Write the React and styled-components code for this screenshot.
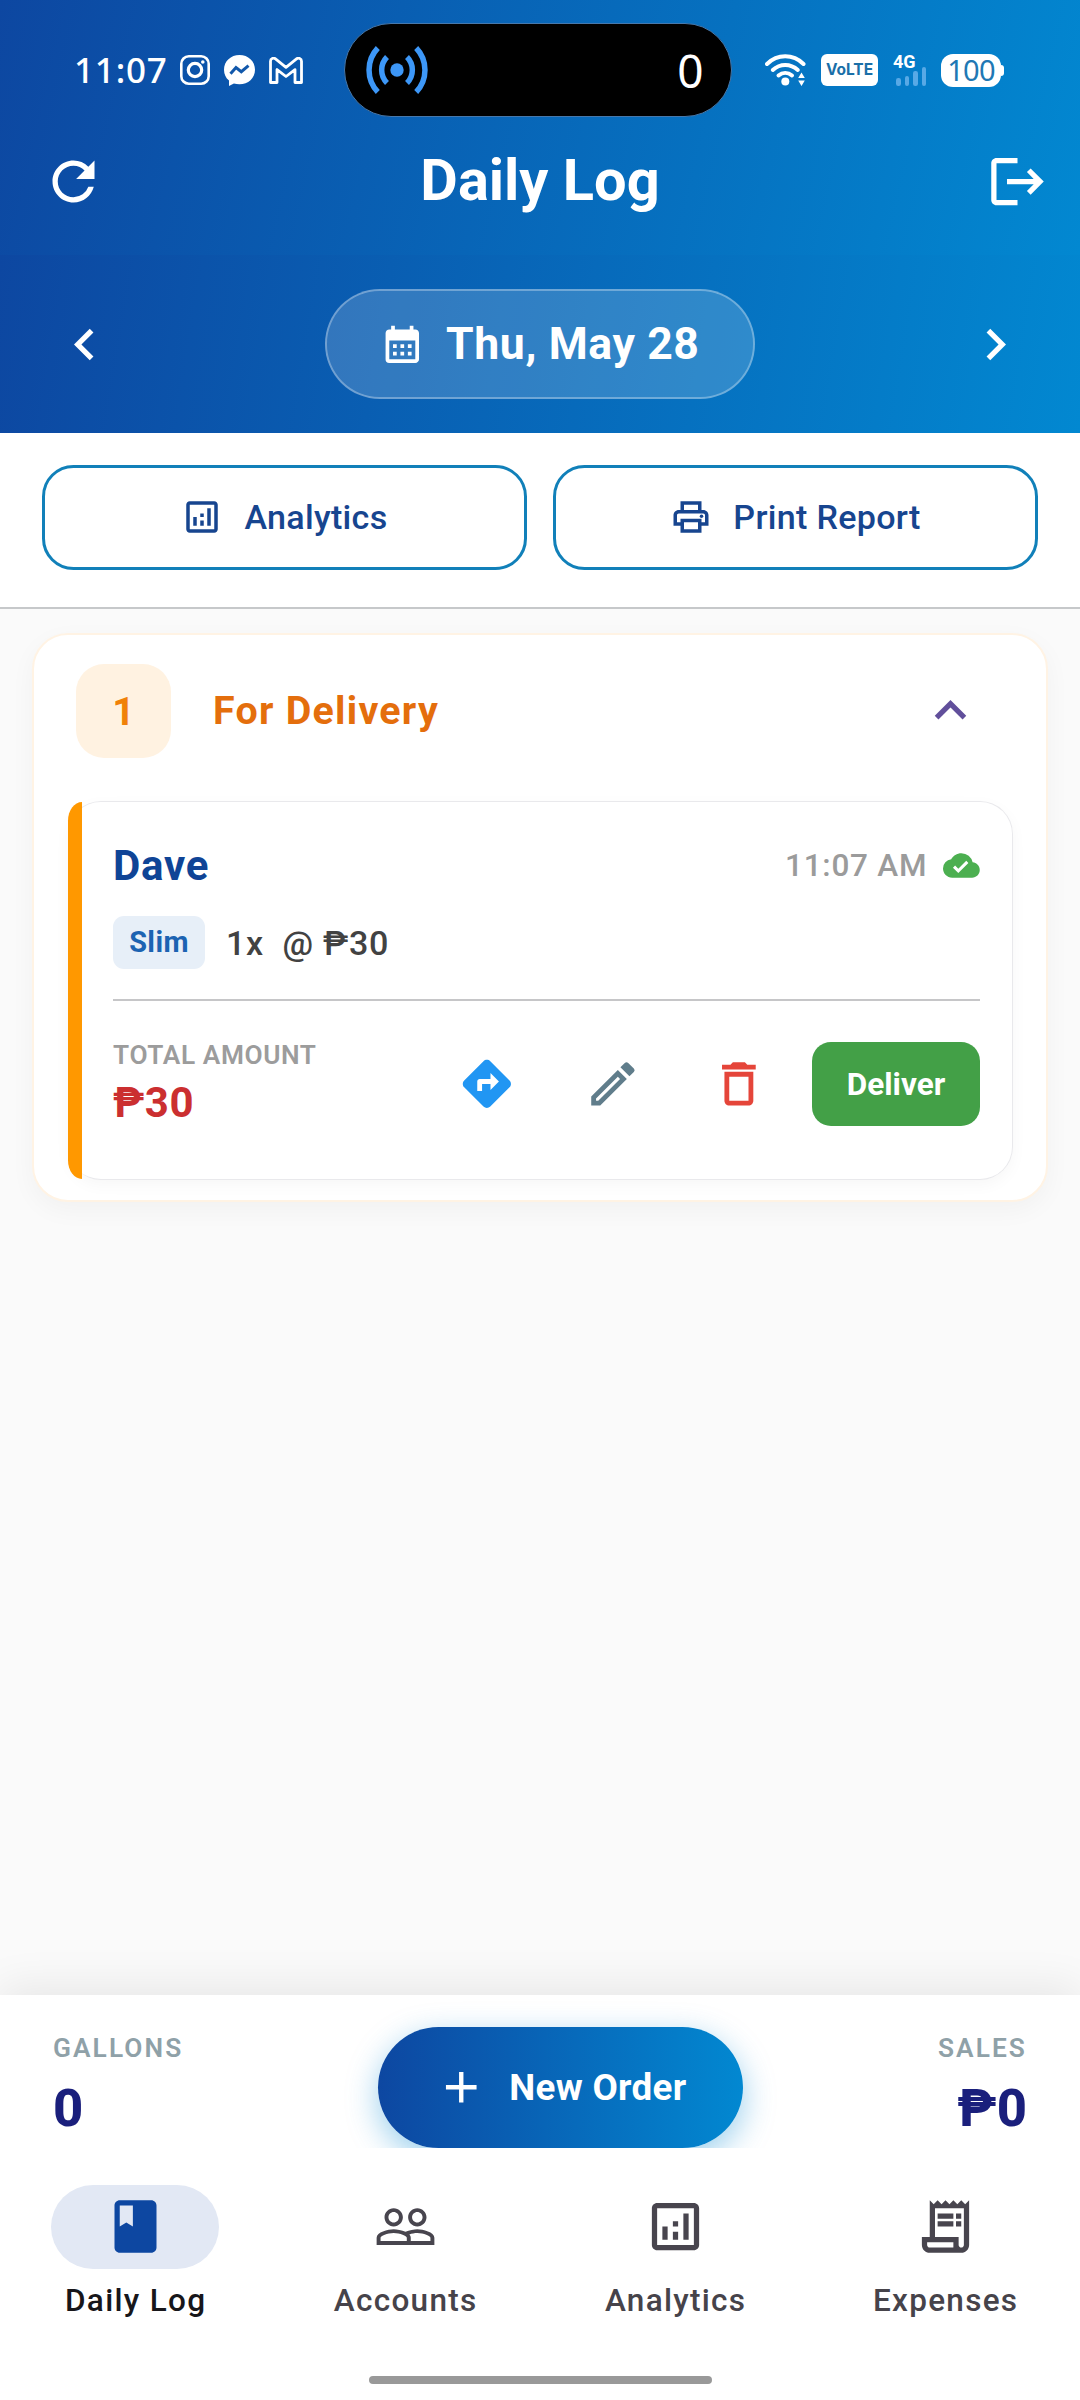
import React from "react";
import styled, { createGlobalStyle } from "styled-components";
import {
  MdAdd,
  MdCalendarMonth,
  MdChevronLeft,
  MdChevronRight,
  MdClass,
  MdCloudDone,
  MdDeleteOutline,
  MdDirections,
  MdExpandLess,
  MdLogout,
  MdOutlineAnalytics,
  MdOutlineEdit,
  MdOutlinePrint,
  MdOutlineReceiptLong,
  MdPeopleOutline,
  MdRefresh,
} from "react-icons/md";

const GlobalStyle = createGlobalStyle`
  * {
    box-sizing: border-box;
  }

  body {
    margin: 0;
    background: #fafafa;
    font-family: Roboto, "Noto Sans", sans-serif;
  }

  svg {
    display: block;
    flex-shrink: 0;
  }

  button {
    font-family: inherit;
    padding: 0;
    border: none;
    background: none;
  }
`;

const Screen = styled.div`
  width: 1080px;
  height: 2400px;
  display: flex;
  flex-direction: column;
  background: #fafafa;
  overflow: hidden;
`;

const Header = styled.header`
  height: 255px;
  flex-shrink: 0;
  background: linear-gradient(103.3deg, #0d47a1, #0288d1);
  color: #fff;
`;

const StatusBar = styled.div`
  height: 108px;
  padding: 23px 76px 0 74px;
  display: flex;
  align-items: flex-start;
  justify-content: space-between;
`;

const StatusGroup = styled.div`
  height: 94px;
  display: flex;
  align-items: center;
  gap: ${(props) => props.$gap}px;
`;

const Clock = styled.span`
  font-family: "Noto Sans", sans-serif;
  font-weight: 500;
  font-size: 35px;
  line-height: 40px;
  width: 92px;
  letter-spacing: 0.8px;
`;

const Island = styled.div`
  width: 388px;
  height: 94px;
  margin-left: 7px;
  padding: 0 27px 0 20px;
  border: 1.5px solid #4778ab;
  border-radius: 47px;
  background: #000;
  display: flex;
  align-items: center;
  justify-content: space-between;
  font-family: "Noto Sans", sans-serif;
  font-size: 46px;
  line-height: 60px;
`;

const VolteBadge = styled.span`
  width: 57px;
  height: 32px;
  border-radius: 6px;
  background: #fff;
  color: #1a6fa8;
  font-family: Inter, sans-serif;
  font-weight: 700;
  font-size: 15.5px;
  line-height: 32px;
  text-align: center;
`;

const Network = styled.div`
  width: 33px;
  height: 32px;
  display: flex;
  flex-direction: column;
  font-weight: 700;
  font-size: 18px;
  line-height: 15px;
`;

const SignalBars = styled.div`
  height: 20px;
  margin: -3px 0 0 3px;
  display: flex;
  align-items: flex-end;
  gap: 4px;
`;

const SignalBar = styled.i`
  width: 4.5px;
  height: ${(props) => props.$height}px;
  border-radius: 2.2px;
  background: #58a9e6;
`;

const Battery = styled.div`
  display: flex;
  align-items: center;
`;

const BatteryBody = styled.span`
  width: 60px;
  height: 33px;
  border-radius: 12px;
  background: #fff;
  color: #2078b4;
  font-family: "Noto Sans", sans-serif;
  font-size: 29px;
  line-height: 32px;
  letter-spacing: -0.7px;
  text-align: center;
`;

const BatteryTip = styled.i`
  width: 3px;
  height: 11px;
  border-radius: 0 3px 3px 0;
  background: #fff;
`;

const AppBar = styled.div`
  height: 147px;
  padding: 0 31px 0 42px;
  display: flex;
  align-items: center;
  justify-content: space-between;
`;

const Title = styled.h1`
  margin: 0 11px 4px 0;
  font-weight: 700;
  font-size: 57.75px;
  line-height: 68px;
`;

const DateBar = styled.div`
  height: 178px;
  flex-shrink: 0;
  padding: 0 53px;
  display: flex;
  align-items: center;
  justify-content: space-between;
  background: linear-gradient(99.4deg, #0d47a1, #0288d1);
  color: #fff;
`;

const DatePill = styled.button`
  width: 430px;
  height: 110px;
  border: 2px solid rgba(255, 255, 255, 0.42);
  border-radius: 55px;
  background: rgba(255, 255, 255, 0.17);
  background-clip: padding-box;
  color: #fff;
  display: flex;
  align-items: center;
  justify-content: center;
  gap: 21px;
  font-weight: 700;
  font-size: 44.6px;
  letter-spacing: 0.6px;
`;

const Actions = styled.div`
  height: 176px;
  flex-shrink: 0;
  padding: 32px 42px 0;
  display: flex;
  gap: 26px;
  background: #fff;
  border-bottom: 2px solid #c6c8ca;
`;

const ActionButton = styled.button`
  flex: 1;
  height: 105px;
  padding-bottom: 1px;
  border: 3.5px solid #1180b9;
  border-radius: 31.5px;
  color: #17458f;
  display: flex;
  align-items: center;
  justify-content: center;
  gap: 21px;
  font-weight: 500;
  font-size: 34.1px;
  letter-spacing: 0.3px;
`;

const Content = styled.main`
  flex: 1;
  padding: 24px 32px;
`;

const Section = styled.section`
  height: 569px;
  padding: 28px 33px 18px 34px;
  border: 2px solid #fff3e4;
  border-radius: 36px;
  background: #fff;
  box-shadow: 0 8px 26px rgba(0, 0, 0, 0.04);
`;

const SectionHeader = styled.div`
  height: 95px;
  padding: 0 31px 0 8px;
  margin-bottom: 43px;
  display: flex;
  align-items: center;
`;

const CountBadge = styled.span`
  width: 95px;
  height: 94px;
  border-radius: 28px;
  background: #fff2e1;
  color: #f08108;
  font-weight: 700;
  font-size: 39.4px;
  line-height: 95px;
  text-align: center;
`;

const SectionTitle = styled.h2`
  flex: 1;
  margin: 0 0 0 42px;
  color: #e46e0c;
  font-weight: 700;
  font-size: 39.4px;
  line-height: 46px;
  letter-spacing: 1.25px;
`;

const OrderCard = styled.article`
  height: 379px;
  display: flex;
  border: 1.5px solid #e9e9ec;
  border-left: none;
  border-radius: 33px;
  box-shadow: 0 5px 16px rgba(0, 0, 0, 0.035);

  &::before {
    content: "";
    width: 13.5px;
    border-radius: 15px 0 0 15px / 20px 0 0 20px;
    background: #ff9800;
  }
`;

const OrderBody = styled.div`
  flex: 1;
  padding: 33px 32px 0 31.5px;
`;

const OrderTop = styled.div`
  height: 60px;
  display: flex;
  align-items: center;
  justify-content: space-between;
`;

const Customer = styled.h3`
  margin: 0;
  color: #0f4496;
  font-weight: 700;
  font-size: 42px;
  letter-spacing: 0.8px;
`;

const OrderTime = styled.div`
  display: flex;
  align-items: center;
  gap: 16px;
  color: #9b9b9b;
  font-weight: 500;
  font-size: 31.5px;
  letter-spacing: 0.75px;

  svg {
    color: #4caf50;
  }
`;

const OrderLine = styled.div`
  height: 53px;
  margin-top: 21px;
  display: flex;
  align-items: center;
  color: #424242;
  font-weight: 500;
  font-size: 34.1px;
  letter-spacing: 0.75px;
  white-space: pre;
`;

const ProductChip = styled.span`
  width: 92px;
  height: 53px;
  margin-right: 21px;
  border-radius: 11px;
  background: #e7eff8;
  color: #1c63b2;
  font-weight: 700;
  font-size: 28.9px;
  line-height: 53px;
  letter-spacing: 0.4px;
  text-align: center;
`;

const Divider = styled.hr`
  height: 2px;
  margin: 30px 0 20px;
  border: none;
  background: #c6c6c8;
`;

const OrderFooter = styled.div`
  height: 126px;
  display: flex;
  align-items: center;
`;

const Total = styled.div`
  flex: 1;
`;

const TotalLabel = styled.div`
  color: #9c9c9c;
  font-weight: 600;
  font-size: 26.25px;
  line-height: 37px;
  letter-spacing: 0.6px;
`;

const TotalValue = styled.div`
  color: #cb2f30;
  font-weight: 700;
  font-size: 42px;
  line-height: 57px;
  letter-spacing: 0.5px;
`;

const IconButton = styled.button`
  width: 126px;
  height: 126px;
  display: flex;
  align-items: center;
  justify-content: center;
  color: ${(props) => props.$color};
`;

const DeliverButton = styled.button`
  width: 168px;
  height: 84px;
  margin-left: 10px;
  border-radius: 19px;
  background: #43a047;
  color: #fff;
  font-weight: 700;
  font-size: 31.5px;
`;

const Summary = styled.div`
  height: 153px;
  flex-shrink: 0;
  padding: 32px 53px 0;
  display: flex;
  align-items: flex-start;
  justify-content: space-between;
  background: #fff;
  box-shadow: 0 -8px 40px rgba(0, 0, 0, 0.08);
  overflow: hidden;
`;

const Stat = styled.div`
  text-align: ${(props) => props.$align};
`;

const StatLabel = styled.div`
  color: #8fa1a8;
  font-weight: 600;
  font-size: 26.25px;
  line-height: 42px;
  letter-spacing: 2.1px;
`;

const StatValue = styled.div`
  margin-top: 8px;
  color: #1a1f7c;
  font-weight: 800;
  font-size: 52.5px;
  line-height: 62px;
`;

const NewOrderButton = styled.button`
  width: 365px;
  height: 121px;
  border-radius: 61px;
  background: linear-gradient(90deg, #0d47a1, #0288d1);
  box-shadow: 0 10px 32px rgba(2, 136, 209, 0.4);
  color: #fff;
  display: flex;
  align-items: center;
  justify-content: center;
  gap: 22px;
  font-weight: 700;
  font-size: 36.75px;
  letter-spacing: 0.3px;
`;

const NavBar = styled.nav`
  height: 252px;
  flex-shrink: 0;
  display: flex;
  flex-direction: column;
  justify-content: space-between;
  align-items: center;
  padding: 37px 0 16px;
  background: #fff;
`;

const NavItems = styled.div`
  width: 100%;
  display: grid;
  grid-template-columns: repeat(4, 1fr);
`;

const NavItem = styled.a`
  display: flex;
  flex-direction: column;
  align-items: center;
  gap: 11px;
  color: ${(props) => (props.$active ? "#17161a" : "#46434a")};
  font-weight: 500;
  font-size: 31.5px;
  line-height: 42px;
  letter-spacing: 1.3px;
  text-indent: 1.3px;
`;

const NavIndicator = styled.span`
  width: 168px;
  height: 84px;
  padding-bottom: 1px;
  border-radius: 42px;
  display: flex;
  align-items: center;
  justify-content: center;
  background: ${(props) => (props.$active ? "#e2e8f4" : "transparent")};
  color: ${(props) => (props.$active ? "#0d47a1" : "#48454e")};
`;

const HomeHandle = styled.div`
  width: 343px;
  height: 8px;
  border-radius: 4px;
  background: #999;
`;

const InstagramIcon = () => (
  <svg width="30" height="30" viewBox="0 0 30 30" fill="none" stroke="#fff">
    <rect x="1.3" y="1.3" width="27.4" height="27.4" rx="7.5" strokeWidth="2.6" />
    <circle cx="15" cy="15" r="6.7" strokeWidth="3.2" />
    <circle cx="22.8" cy="7" r="1.8" fill="#fff" stroke="none" />
  </svg>
);

const MessengerIcon = () => (
  <svg width="31" height="31" viewBox="0 0 31 31">
    <path
      fill="#fff"
      d="M15.5 0C6.8 0 0 6.3 0 14.7c0 4.4 1.8 8.2 5 10.9V31l4.9-2.5c1.7.5 3.6.8 5.6.8C24.2 29.3 31 23 31 14.7 31 6.3 24.2 0 15.5 0z"
    />
    <path d="M6.5 18.8l5.5-6.3 5.3 4.2 7.2-6" fill="none" stroke="#1158ab" strokeWidth="3" />
  </svg>
);

const GmailIcon = () => (
  <svg width="34" height="27" viewBox="0 0 34 27" fill="none" stroke="#fff" strokeWidth="2.8">
    <path
      strokeLinejoin="round"
      d="M1.5 25.5V4.2c0-2.8 3-3.8 5-2.3L17 10.3 27.5 1.9c2-1.5 5-.5 5 2.3v21.3h-6.5V12.6L17 19.5 8 12.6v12.9z"
    />
  </svg>
);

const HotspotIcon = () => (
  <svg width="64" height="48" viewBox="0 0 64 48" fill="none" stroke="#3d97f7" strokeWidth="5.5">
    <circle cx="32" cy="24" r="6.7" fill="#3d97f7" stroke="none" />
    <path d="M22 11a18.5 18.5 0 0 0 0 26M42 11a18.5 18.5 0 0 1 0 26" />
    <path d="M12.8 2a32 32 0 0 0 0 44M51.2 2a32 32 0 0 1 0 44" />
  </svg>
);

const WifiIcon = () => (
  <svg width="41" height="32" viewBox="0 0 41 32" fill="none" stroke="#fff" strokeLinecap="round">
    <path d="M2 10c10.5-10.2 26-10.2 36.5 0" strokeWidth="4" />
    <path d="M7.8 16c7.2-6.7 17.7-6.7 25 0" strokeWidth="4" />
    <path d="M13.5 21.5c4-3.4 9.5-3.4 13.5 0" strokeWidth="4" />
    <circle cx="20.3" cy="27.6" r="4" fill="#fff" stroke="none" />
    <path d="M36.5 18.5l3.3 5.500h-6.6zM36.5 32l3.3-5.500h-6.6z" fill="#fff" stroke="none" />
  </svg>
);

const signal = [8, 10, 15, 19.5];

const navItems = [
  { label: "Daily Log", icon: MdClass, active: true },
  { label: "Accounts", icon: MdPeopleOutline },
  { label: "Analytics", icon: MdOutlineAnalytics },
  { label: "Expenses", icon: MdOutlineReceiptLong },
];

const App = () => {
  return (
    <Screen>
      <GlobalStyle />
      <Header>
        <StatusBar>
          <StatusGroup $gap={14}>
            <Clock>11:07</Clock>
            <InstagramIcon />
            <MessengerIcon />
            <GmailIcon />
          </StatusGroup>
          <Island>
            <HotspotIcon />
            <span>0</span>
          </Island>
          <StatusGroup $gap={15}>
            <WifiIcon />
            <VolteBadge>VoLTE</VolteBadge>
            <Network>
              4G
              <SignalBars>
                {signal.map((height) => (
                  <SignalBar key={height} $height={height} />
                ))}
              </SignalBars>
            </Network>
            <Battery>
              <BatteryBody>100</BatteryBody>
              <BatteryTip />
            </Battery>
          </StatusGroup>
        </StatusBar>
        <AppBar>
          <MdRefresh size={63} />
          <Title>Daily Log</Title>
          <MdLogout size={63} />
        </AppBar>
      </Header>

      <DateBar>
        <MdChevronLeft size={63} />
        <DatePill>
          <MdCalendarMonth size={44.6} />
          Thu, May 28
        </DatePill>
        <MdChevronRight size={63} />
      </DateBar>

      <Actions>
        <ActionButton>
          <MdOutlineAnalytics size={42} />
          Analytics
        </ActionButton>
        <ActionButton>
          <MdOutlinePrint size={42} />
          Print Report
        </ActionButton>
      </Actions>

      <Content>
        <Section>
          <SectionHeader>
            <CountBadge>1</CountBadge>
            <SectionTitle>For Delivery</SectionTitle>
            <MdExpandLess size={63} color="#614f9b" />
          </SectionHeader>
          <OrderCard>
            <OrderBody>
              <OrderTop>
                <Customer>Dave</Customer>
                <OrderTime>
                  11:07 AM
                  <MdCloudDone size={36.75} />
                </OrderTime>
              </OrderTop>
              <OrderLine>
                <ProductChip>Slim</ProductChip>
                {"1x  @ ₱30"}
              </OrderLine>
              <Divider />
              <OrderFooter>
                <Total>
                  <TotalLabel>TOTAL AMOUNT</TotalLabel>
                  <TotalValue>₱30</TotalValue>
                </Total>
                <IconButton $color="#2196f3">
                  <MdDirections size={57.75} />
                </IconButton>
                <IconButton $color="#607d8b">
                  <MdOutlineEdit size={57.75} />
                </IconButton>
                <IconButton $color="#e5453a">
                  <MdDeleteOutline size={57.75} />
                </IconButton>
                <DeliverButton>Deliver</DeliverButton>
              </OrderFooter>
            </OrderBody>
          </OrderCard>
        </Section>
      </Content>

      <Summary>
        <Stat $align="left">
          <StatLabel>GALLONS</StatLabel>
          <StatValue>0</StatValue>
        </Stat>
        <NewOrderButton>
          <MdAdd size={52.5} />
          New Order
        </NewOrderButton>
        <Stat $align="right">
          <StatLabel>SALES</StatLabel>
          <StatValue>₱0</StatValue>
        </Stat>
      </Summary>

      <NavBar>
        <NavItems>
          {navItems.map(({ label, icon: Icon, active }) => (
            <NavItem key={label} $active={active}>
              <NavIndicator $active={active}>
                <Icon size={63} />
              </NavIndicator>
              {label}
            </NavItem>
          ))}
        </NavItems>
        <HomeHandle />
      </NavBar>
    </Screen>
  );
};

export default App;
